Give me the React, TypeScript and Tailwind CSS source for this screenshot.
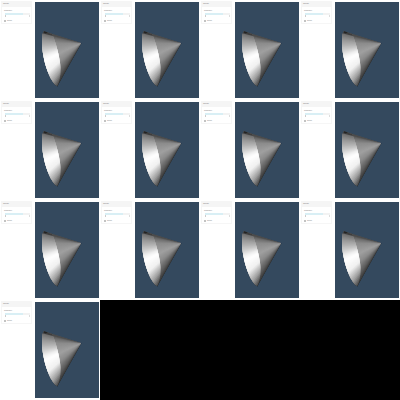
const tiles = Array.from({ length: 13 }, (_, i) => i);

type Stop = [number, number];

// grey level along the sweep from the cone's top edge (0) to its bottom edge (1)
const bodyStops: Stop[] = [[0, 0x44], [0.06, 0x6a], [0.2, 0x8c], [0.5, 0xa0], [0.7, 0x8a], [0.87, 0x5c], [1, 0x1c]];
const capStops: Stop[] = [[0, 0x22], [0.03, 0x70], [0.15, 0x9a], [0.3, 0xc4], [0.42, 0xf0], [0.5, 0xff], [0.7, 0xf0], [0.85, 0xa0], [0.93, 0x55], [1, 0x11]];

const outline = "M9 29.300 L46.500 41 L22.200 84.200 C15 80 8 60 7 42 C6.800 36 7.500 31 9 29.300Z";
const capOutline = "M9 29.300 L17.200 32 C20 38 25 55 25.500 66 C25.700 74 24.500 80 22.200 84.200 C15 80 8 60 7 42 C6.800 36 7.500 31 9 29.300Z";

function grey(stops: Stop[], t: number) {
  for (let i = 1; i < stops.length; i++) {
    if (t <= stops[i][0]) {
      const [a, va] = stops[i - 1];
      const [b, vb] = stops[i];
      const v = Math.round(va + ((vb - va) * (t - a)) / (b - a));
      return `rgb(${v},${v},${v})`;
    }
  }
  return "#111";
}

function Fan({ stops }: { stops: Stop[] }) {
  const steps = 48;
  const start = (199 * Math.PI) / 180;
  const end = (118 * Math.PI) / 180;
  // each wedge runs on under the next one so no seams show between them
  const rays = Array.from({ length: steps }, (_, i) => {
    const a0 = start + ((end - start) * i) / steps;
    const a1 = start + ((end - start) * (i + 3)) / steps;
    const p0 = `${46.5 + 90 * Math.cos(a0)},${41 + 90 * Math.sin(a0)}`;
    const p1 = `${46.5 + 90 * Math.cos(a1)},${41 + 90 * Math.sin(a1)}`;
    return <polygon key={i} points={`46.5,41 ${p0} ${p1}`} fill={grey(stops, (i + 0.5) / steps)} />;
  });
  return <>{rays.reverse()}</>;
}

function Cone({ id }: { id: number }) {
  return (
    <svg viewBox="0 0 64.5 96.5" className="block h-full w-full">
      <defs>
        <clipPath id={`body${id}`}>
          <path d={outline} />
        </clipPath>
        <clipPath id={`cap${id}`}>
          <path d={capOutline} />
        </clipPath>
      </defs>
      <g clipPath={`url(#body${id})`}>
        <Fan stops={bodyStops} />
      </g>
      <g clipPath={`url(#cap${id})`}>
        <Fan stops={capStops} />
      </g>
      <path d="M9 29.200 L13 30.500 L10.500 31.200 L8.600 30.400Z" fill="#222" />
    </svg>
  );
}

function Tile({ id }: { id: number }) {
  return (
    <div className="flex h-[100px] w-[100px] bg-white">
      <div className="w-[34px] shrink-0 pt-[1px] pl-[1px]">
        <div className="h-[6px] w-[31px] bg-[#f5f5f5] pl-[2px] text-[2.500px] leading-[6px] text-[#777]">Cone</div>
        <div className="h-[17px] w-[31px] border-x border-b border-[#f6f6f6] px-[2px]">
          <div className="pt-[2px] text-[2.500px] leading-[3px] text-[#888]">Shader</div>
          <div className="mt-[1px] ml-[1px] h-[2px] w-[25px] bg-[#f3f3f3]">
            <div className="h-full w-[18px] bg-[#d9eff5]" />
          </div>
          <div className="ml-[1px] flex w-[25px] justify-between">
            <div className="h-[2px] w-[1px] bg-[#ccc]" />
            <div className="h-[2px] w-[1px] bg-[#ddd]" />
          </div>
          <div className="mt-[2px] flex h-[3px] items-center gap-[1px] text-[2.500px] text-[#888]">
            <div className="h-[2px] w-[2px] bg-[#c4c4c4]" />
            <span>Spin</span>
          </div>
        </div>
      </div>
      <div className="mt-[1.5px] ml-[0.5px] h-[96.5px] w-[64.5px] bg-[#34495e]">
        <Cone id={id} />
      </div>
    </div>
  );
}

export default function App() {
  return (
    <div className="grid h-[400px] w-[400px] grid-cols-4 content-start overflow-hidden bg-black font-['Liberation_Sans',sans-serif]">
      {tiles.map((i) => (
        <Tile key={i} id={i} />
      ))}
    </div>
  );
}
